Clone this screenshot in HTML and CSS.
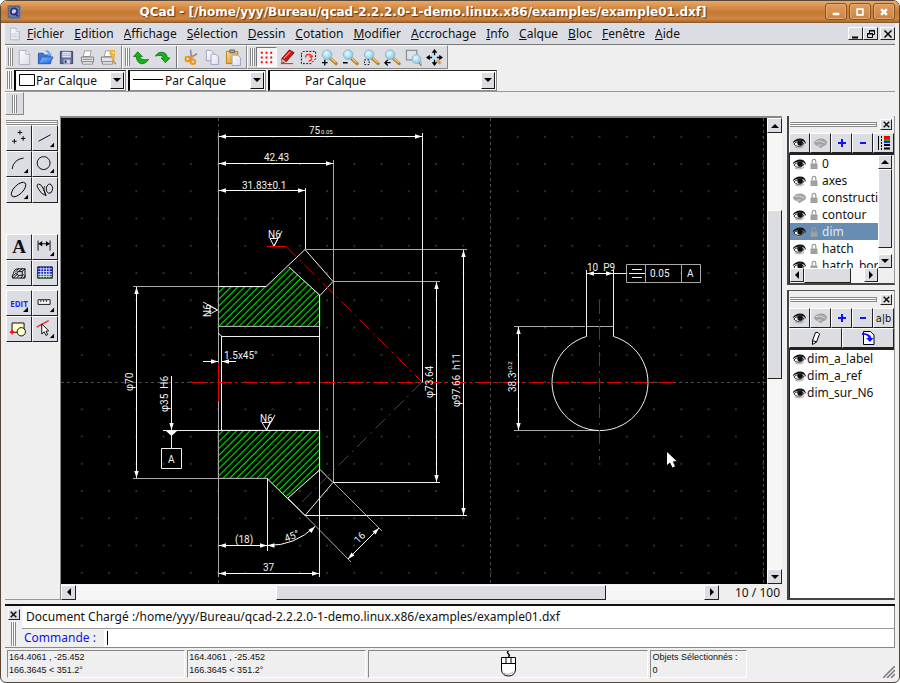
FILE: index.html
```html
<!DOCTYPE html>
<html lang="fr">
<head>
<meta charset="utf-8">
<title>QCad</title>
<link rel="stylesheet" href="styles.css">
</head>
<body>
<svg class="sprite" aria-hidden="true">
  <defs>
    <linearGradient id="gGold" x1="0" y1="0" x2="1" y2="1"><stop offset="0" stop-color="#ffe08a"/><stop offset="1" stop-color="#d08a10"/></linearGradient>
    <linearGradient id="gPaper" x1="0" y1="0" x2="1" y2="1"><stop offset="0" stop-color="#fff"/><stop offset="1" stop-color="#d9dcec"/></linearGradient>
    <radialGradient id="gLens" cx=".4" cy=".35" r=".7"><stop offset="0" stop-color="#eafcff"/><stop offset="1" stop-color="#7cc4e8"/></radialGradient>
    <linearGradient id="gBlue" x1="0" y1="0" x2="1" y2="1"><stop offset="0" stop-color="#8cc4ff"/><stop offset="1" stop-color="#1f5fd8"/></linearGradient>
  </defs>
  <symbol id="page" viewBox="0 0 18 18"><path d="M3.500 1.500h7l4 4v11h-11z" fill="url(#gPaper)" stroke="#a9adc0"/><path d="M10.500 1.500v4h4" fill="#fff" stroke="#a9adc0"/></symbol>
  <symbol id="lens" viewBox="0 0 18 18"><path d="M10 10l6 5.500" stroke="#b9852f" stroke-width="3.400" stroke-linecap="round"/><path d="M10.500 9.800l5 4.600" stroke="#f5cf8c" stroke-width="1.200"/><circle cx="6.500" cy="6" r="5" fill="url(#gLens)" stroke="#8fb4c8"/></symbol>
  <symbol id="eye" viewBox="0 0 16 12"><path d="M1 5Q5 0 11 1.500Q14.500 3 15 7Q13 3.800 9 3.300Q4 3 1 6z" fill="currentColor"/><path d="M2 7Q6 2.500 13 6.500Q10 10.500 6 9.500Q3.500 9 2 7z" fill="#fff" stroke="currentColor" stroke-width=".9"/><circle cx="8.600" cy="6" r="2.900" fill="currentColor"/><path d="M3 10l3 1.300 4-.2 3-2" stroke="#999" fill="none"/></symbol>
  <symbol id="eyeoff" viewBox="0 0 16 12"><path d="M1 5.500Q4 .8 9 1.200Q14 1.500 15 5.500Q14 9 11 9.500L8 11.500 5.500 9.500Q2 9 1 5.500z" fill="#a3a3a3"/><path d="M3 4.500Q7 2.500 13 6M5 8.500l4-.5" stroke="#dcdcdc" fill="none"/></symbol>
  <symbol id="lock" viewBox="0 0 8 12"><path d="M2 6V3.500Q2 1.500 4 1.500T6 3.500V6" fill="none" stroke="#999" stroke-width="1.300"/><path d="M0 6h8v6H0z" fill="#999"/><path d="M0 8.500h8M0 10.500h8" stroke="#b5b5b5" stroke-width=".6"/></symbol>
  <symbol id="up" viewBox="0 0 8 8"><path d="M0 6h8L4 2z"/></symbol>
  <symbol id="down" viewBox="0 0 8 8"><path d="M0 2h8L4 6z"/></symbol>
  <symbol id="left" viewBox="0 0 8 8"><path d="M6 0v8L2 4z"/></symbol>
  <symbol id="right" viewBox="0 0 8 8"><path d="M2 0v8L6 4z"/></symbol>
  <symbol id="x" viewBox="0 0 8 8"><path d="M.8.8l6.400 6.400M7.200.8L.8 7.200" stroke="currentColor" stroke-width="1.700"/></symbol>
  <symbol id="corner" viewBox="0 0 6 6"><path d="M6 0v6H0z"/></symbol>
</svg>

<div class="window">
  <header class="title">
    <svg class="logo" viewBox="0 0 16 16"><rect width="16" height="16" rx="2" fill="#79809c"/><path d="M2 2h12v12H2z" fill="none" stroke="#3c4468" stroke-dasharray="2 1"/><circle cx="8" cy="7.500" r="3.600" fill="#c9cfe8" stroke="#2b2f80" stroke-width="2"/><path d="M9 9l3.500 4" stroke="#2b2f80" stroke-width="2"/></svg>
    <h1>QCad - [/home/yyy/Bureau/qcad-2.2.2.0-1-demo.linux.x86/examples/example01.dxf]</h1>
    <div class="winbtns">
      <button aria-label="Réduire"><svg viewBox="0 0 12 12"><path d="M2 8.500h8" stroke="#fff" stroke-width="3"/></svg></button>
      <button aria-label="Agrandir"><svg viewBox="0 0 12 12"><path d="M2.500 2.500h7v7h-7z" stroke="#fff" stroke-width="2" fill="none"/></svg></button>
      <button aria-label="Fermer"><svg viewBox="0 0 12 12"><path d="M2.500 2.500l7 7M9.500 2.500l-7 7" stroke="#fff" stroke-width="3"/></svg></button>
    </div>
  </header>

  <nav class="menu">
    <svg class="docicon" viewBox="0 0 18 18"><use href="#page"/><path d="M5 9h6M5 12h6" stroke="#b9bdd0"/></svg>
    <button><u>F</u>ichier</button><button><u>E</u>dition</button><button><u>A</u>ffichage</button><button><u>S</u>élection</button><button><u>D</u>essin</button><button><u>C</u>otation</button><button><u>M</u>odifier</button><button><u>A</u>ccrochage</button><button><u>I</u>nfo</button><button><u>C</u>alque</button><button><u>B</u>loc</button><button><u>F</u>enêtre</button><button><u>A</u>ide</button>
    <div class="mdi">
      <button aria-label="Réduire le document"><svg viewBox="0 0 10 10"><path d="M1 8.500h6" stroke="#000" stroke-width="2"/></svg></button>
      <button aria-label="Restaurer le document"><svg viewBox="0 0 10 10"><path d="M3.500 4V1.500h5v4H7M3 2h6M1.500 4.500h5v4h-5zM1 5h6" stroke="#000" fill="none"/></svg></button>
      <button class="apart" aria-label="Fermer le document"><svg viewBox="0 0 10 10"><path d="M1.500 1.500l7 7M8.500 1.500l-7 7" stroke="#000" stroke-width="1.500"/></svg></button>
    </div>
  </nav>

  <div class="tools">
    <div class="bar">
      <i class="grip"></i>
      <button aria-label="Nouveau"><svg viewBox="0 0 18 18"><use href="#page"/></svg></button>
      <button aria-label="Ouvrir"><svg viewBox="0 0 18 18"><path d="M1.500 15.500v-11h5l1 2h7v9z" fill="#3c78dc" stroke="#2454b4"/><path d="M8 2q5-2 6 3l2-1-2.500 4L10 5.500l2 0q-1-3-4-3.500z" fill="#6aa8f4"/><path d="M1.500 15.500l3.500-7h12l-3.500 7z" fill="url(#gBlue)" stroke="#2a62c8"/></svg></button>
      <button aria-label="Enregistrer"><svg viewBox="0 0 18 18"><path d="M2.500 2.500h13v13h-13z" fill="#5f6a98" stroke="#39406a"/><path d="M4.500 3h9v6h-9z" fill="#e4e8f8"/><path d="M5 5h8M5 7h8" stroke="#a9b0d0"/><path d="M6 11h7v4.500H6z" fill="#cdd2e8"/><path d="M7 12h2v3H7z" fill="#39406a"/></svg></button>
      <button aria-label="Imprimer"><svg viewBox="0 0 18 18"><path d="M6 2h7l-1.500 6h-7z" fill="#fff" stroke="#999"/><path d="M2.500 8.500h13v5h-13z" fill="#e3e3e3" stroke="#777"/><path d="M3.500 13.500h11v2.500h-11z" fill="#f8f8f8" stroke="#888"/><path d="M4 11h10" stroke="#888"/></svg></button>
      <button aria-label="Aperçu avant impression"><svg viewBox="0 0 18 18"><path d="M6 2h7l-1.500 6h-7z" fill="#fff" stroke="#999"/><path d="M1.500 8.500h13v5h-13z" fill="#e3e3e3" stroke="#777"/><path d="M2.500 13.500h11v2.500h-11z" fill="#f8f8f8" stroke="#888"/><path d="M10 1h6v6l-2 5-2-2 2-3-4-1z" fill="#f0b030"/><path d="M12 3h3v3" fill="#ffe8a0"/><path d="M13 12l4 4" stroke="#e09820" stroke-width="2"/></svg></button>
    </div>
    <div class="bar">
      <i class="grip"></i>
      <button aria-label="Annuler"><svg viewBox="0 0 18 18"><path d="M5 3l5 5H7q1 4.500 9.500 3Q13 16.500 8 15.500 4 14 3.500 8H.5z" fill="#17b417" stroke="#0a6d0a" stroke-width=".8"/></svg></button>
      <button aria-label="Rétablir"><svg viewBox="0 0 18 18"><path d="M12 14.500l-4.500-5H10.500Q9 5.500 1.500 7.500 4 3 9 3.500q5 1 5 6h3z" fill="#17b417" stroke="#0a6d0a" stroke-width=".8"/></svg></button>
      <i class="sep"></i>
      <button aria-label="Couper"><svg viewBox="0 0 18 18"><path d="M8 1l1 9M15 5L6 10" stroke="#8a8fa0" stroke-width="1.800"/><circle cx="5" cy="10.500" r="2.400" fill="none" stroke="#f0940c" stroke-width="2"/><circle cx="10.500" cy="13.500" r="2.400" fill="none" stroke="#f0940c" stroke-width="2"/><path d="M7 10l4-2" stroke="#f0940c" stroke-width="2"/></svg></button>
      <button aria-label="Copier"><svg viewBox="0 0 18 18"><path d="M2.500 1.500h5l3 3v8h-8z" fill="url(#gPaper)" stroke="#9ca2c4"/><path d="M7.500 5.500h5l3 3v8h-8z" fill="url(#gPaper)" stroke="#9ca2c4"/></svg></button>
      <button aria-label="Coller"><svg viewBox="0 0 18 18"><path d="M1.500 2.500h12v13h-12z" fill="url(#gGold)" stroke="#b87c10"/><path d="M5 1h5v3H5z" fill="#9aa0b0" stroke="#666"/><path d="M7.500 6.500h6l3 3v8h-9z" fill="url(#gPaper)" stroke="#9ca2c4"/></svg></button>
    </div>
    <div class="bar">
      <i class="grip"></i>
      <button class="pressed" aria-label="Grille"><svg viewBox="0 0 18 18"><path d="M3 4h14M3 9h14M3 14h14" stroke="#f00" stroke-width="2" stroke-dasharray="2 3"/></svg></button>
      <button aria-label="Mode brouillon"><svg viewBox="0 0 18 18"><path d="M11 1l5 3-8 9-5-3z" fill="#d01818" stroke="#7a0c0c"/><path d="M12 3l-7 7" stroke="#f88" stroke-width="1.200"/><path d="M3 10l5 3-5 2z" fill="#e8c8a0" stroke="#7a0c0c" stroke-width=".7"/><path d="M2 15.500h13" stroke="#f00"/></svg></button>
      <button aria-label="Redessiner"><svg viewBox="0 0 18 18"><path d="M1.500 6q0-3.500 3.500-3.500h11.500v8l-5 5H1.500z" fill="none" stroke="#000" stroke-dasharray="2 1.500"/><path d="M6 9q0-3.500 3.500-3.200T12 9M12 9l-2-1M12 9l1.500-2M12.500 10q-.5 3-3.500 2.500" fill="none" stroke="#f22" stroke-width="1.400"/></svg></button>
      <button aria-label="Zoom avant"><svg viewBox="0 0 18 18"><use href="#lens"/><path d="M1 14.500h6M4 11.500v6" stroke="#000" stroke-width="1.400"/></svg></button>
      <button aria-label="Zoom arrière"><svg viewBox="0 0 18 18"><use href="#lens"/><path d="M1 14.500h5" stroke="#000" stroke-width="1.600"/></svg></button>
      <button aria-label="Zoom auto"><svg viewBox="0 0 18 18"><use href="#lens"/><path d="M1.500 11.500h5v5h-5z" fill="none" stroke="#000" stroke-dasharray="1.700 1.600"/></svg></button>
      <button aria-label="Vue précédente"><svg viewBox="0 0 18 18"><use href="#lens"/><path d="M1 14.500h6M4 11.500l-3 3 3 3" stroke="#000" stroke-width="1.400" fill="none"/></svg></button>
      <button aria-label="Zoom fenêtre"><svg viewBox="0 0 18 18"><path d="M1.500 1.500h11v10h-11z" fill="#dfe3e8" stroke="#8c9098" stroke-width="1.400"/><svg x="6" y="5" width="11" height="11" viewBox="0 0 18 18"><use href="#lens"/></svg></svg></button>
      <button aria-label="Déplacer la vue"><svg viewBox="0 0 18 18"><path d="M11 11l4.500 4.500" stroke="#d8a050" stroke-width="3"/><circle cx="9" cy="9" r="4" fill="#bfe6f6"/><path d="M9 2v4.500M9 11.500V16M2 9h4.500M11.500 9H16" stroke="#000" stroke-width="1.400"/><path d="M9 0l3 4H6zM9 18l3-4H6zM0 9l4-3v6zM18 9l-4-3v6z"/></svg></button>
    </div>
  </div>

  <div class="combos">
    <i class="grip"></i>
    <label class="combo c1"><svg class="swatch" viewBox="0 0 16 12"><path d="M.5.5h15v11H.5z" fill="#fff" stroke="#000"/></svg><select aria-label="Couleur"><option>Par Calque</option></select><span class="drop"><svg viewBox="0 0 8 8"><use href="#down"/></svg></span></label>
    <label class="combo c2"><svg class="dash" viewBox="0 0 30 2"><path d="M0 .5h30" stroke="#000"/></svg><select aria-label="Épaisseur"><option>Par Calque</option></select><span class="drop"><svg viewBox="0 0 8 8"><use href="#down"/></svg></span></label>
    <label class="combo c3"><select aria-label="Type de ligne"><option>Par Calque</option></select><span class="drop"><svg viewBox="0 0 8 8"><use href="#down"/></svg></span></label>
  </div>

  <div class="options"><div class="optgrip"><i class="grip"></i></div></div>

  <main class="work">
    <aside class="palette">
      <i class="hgrip"></i>
      <div class="grid">
        <button aria-label="Points"><svg viewBox="0 0 26 26"><path d="M14 4.500v5M11.500 7h5M8 14v5M5.500 16.500h5M17.500 11v5M15 13.500h5" stroke="#000"/></svg></button>
        <button aria-label="Lignes"><svg viewBox="0 0 26 26"><path d="M6 16.500l13-7" stroke="#000"/><use href="#corner" x="18" y="18" width="5" height="5"/></svg></button>
        <button aria-label="Arcs"><svg viewBox="0 0 26 26"><path d="M5.500 18.500Q7 8 18 6.500" stroke="#000" fill="none"/><use href="#corner" x="18" y="18" width="5" height="5"/></svg></button>
        <button aria-label="Cercles"><svg viewBox="0 0 26 26"><circle cx="11.500" cy="12" r="7" stroke="#000" fill="none"/><use href="#corner" x="18" y="18" width="5" height="5"/></svg></button>
        <button aria-label="Ellipses"><svg viewBox="0 0 26 26"><ellipse cx="12.500" cy="12.500" rx="10" ry="4.800" transform="rotate(-45 12.500 12.500)" stroke="#000" fill="none"/><use href="#corner" x="18" y="18" width="5" height="5"/></svg></button>
        <button aria-label="Splines"><svg viewBox="0 0 26 26"><path d="M14 19Q9 18 6 12 3 7 6 6.500q3 0 5 5 3 6 3 7.500M14 19Q10 10 13 9M19.500 7q3.500 4 0 9-3 2-5-2-1-5 2-7 2-1 3 0z" stroke="#000" fill="none"/></svg></button>
      </div>
      <div class="grid second">
        <button class="serif">A</button>
        <button aria-label="Cotations"><svg viewBox="0 0 26 26"><path d="M5.500 6v11M18.500 6v11M6 9.500h12" stroke="#000"/><path d="M6 9.500l4-3v6zM18 9.500l-4-3v6z"/><use href="#corner" x="18" y="18" width="5" height="5"/></svg></button>
        <button aria-label="Hachures"><svg viewBox="0 0 26 26"><path d="M6 18.500q-1-3 1-5 1-5 4.500-5h8v10zM10.500 14.500l1-3h5v4h-4zM6 17l4-4M7 18.500l4-4M11 18l2-2.500M15 18.500l3-4M18 18.500l2-3M9 12l4-4M13 11l4-3M16 11.500l4-3" stroke="#000" fill="none"/></svg></button>
        <button aria-label="Image"><svg viewBox="0 0 26 26"><path d="M5 6h16v7H5z" fill="#11c"/><path d="M5 13h16v6H5z" fill="#080"/><path d="M5 8.500h16M5 11.500h16M5 14.500h16M5 17h16M8.500 6v13M11.500 6v13M14.500 6v13M17.500 6v13" stroke="#dfe8ff"/><path d="M5 6.500h16v12H5z" stroke="#223" fill="none"/></svg></button>
      </div>
      <div class="grid third">
        <button class="edit">EDIT<svg class="tri" viewBox="0 0 6 6"><use href="#corner"/></svg></button>
        <button aria-label="Mesures"><svg viewBox="0 0 26 26"><path d="M5.500 9.500h13v5h-13zM8.500 10v2M11.500 10v2M14.500 10v2" stroke="#000" fill="#fff"/><use href="#corner" x="18" y="18" width="5" height="5"/></svg></button>
        <button aria-label="Blocs"><svg viewBox="0 0 26 26"><path d="M5.500 6.500h13v10h-13z" stroke="#000" fill="#ffffcc"/><circle cx="15.500" cy="16" r="4.500" stroke="#000" fill="#ffffcc"/><path d="M5.500 14v5M3 16.500h5" stroke="#f00" stroke-width="1.500"/></svg></button>
        <button aria-label="Sélection"><svg viewBox="0 0 26 26"><path d="M4 11l13-7" stroke="#f22" stroke-width="1.400"/><path d="M9.500 7.500v11l2.500-2.500 2 4 2-1-2-3.500 3-.5z" fill="#fff" stroke="#000"/><use href="#corner" x="18" y="18" width="5" height="5"/></svg></button>
      </div>
    </aside>

    <section class="view">
      <div class="canvas">
        <svg viewBox="61 118 706 480" preserveAspectRatio="xMinYMin slice" role="img" aria-label="Dessin">
          <defs>
            <pattern id="dots" x="204.375" y="368.375" width="27.250" height="27.250" patternUnits="userSpaceOnUse"><rect x="13.100" y="13.100" width="1.200" height="1.200" fill="#777"/></pattern>
            <pattern id="hatch" width="4.800" height="4.800" patternUnits="userSpaceOnUse" patternTransform="rotate(45)"><path d="M1.500 0v5" stroke="#0d0" stroke-width="1.200"/></pattern>
            <marker id="arr" markerUnits="userSpaceOnUse" markerWidth="9" markerHeight="6" refX="8" refY="3" orient="auto-start-reverse"><path d="M1 .8L8 3 1 5.200z" fill="#fff"/></marker>
          </defs>
          <rect x="61" y="118" width="2000" height="2000" fill="url(#dots)"/>
          <path class="meta" d="M218.500 118v1500M490.500 118v1500M763.500 118v1500M61 382.500h2000"/>
          <path fill="url(#hatch)" stroke="#0a0" stroke-width=".6" d="M218 287H267L289 267 320 295V326H218zM218 430H320V470L288 498 267 478H218z"/>
          <g class="grey">
            <path d="M218.500 133V577M133 286.500H218M133 478.500H267M218 326.500H320M305.500 249.500H467M333 281.500H440M514 326.500H585M586 326.500H613M514 430.500H600M333.500 160V482"/>
            <path d="M626.500 264.500h74v18h-74zM645.500 264v18M681.500 264v18"/>
            <path d="M333 482L382 531M288 498L351 562"/>
          </g>
          <g class="line">
            <path d="M422.500 133V382M305.500 188V249M319.500 295V577M221.500 336V430M163 430.500H320M221 336.500H320M218 333L222 336.500M267.500 478V551M333 482.500H440M305 515.500H467M218 286.500H266L305 249.500 333 281.500 320 295.500 289 267M267 478.500L305 515.500 333 482.500 320 469.500 288 498"/>
            <path d="M586.500 270V336.500A48 48 0 1 0 613.500 336.500V270M613 273.500H626M629 273.500H645M632 269.500H642M632 277.500H642"/>
            <path d="M161.500 448.500h20v20h-20zM171.500 431V448M270 238.500H278L274 246zM274 246L282 231M262 422.500H270L266.500 430zM266.500 430L275 415M210 306V314L217.500 310zM217.500 310L203 302"/>
          </g>
          <path d="M166 431h11l-5.500 5z" fill="#fff"/>
          <g class="dim">
            <path d="M219 136.500H422"/><path d="M219 163.500H333"/><path d="M219 190.500H305"/>
            <path d="M219 545.500H267"/><path d="M219 573.500H319"/>
            <path d="M436.500 282V482"/><path d="M463.500 250V515"/><path d="M136.500 287V478"/>
            <path d="M518.500 327V430"/><path d="M587 273.500H613"/><path d="M348 559L379 528"/>
            <path d="M267.500 545.500A68 68 0 0 0 315 526.500"/>
          </g>
          <g class="dimend"><path d="M171.500 376V430"/><path d="M203 361.500H218"/><path d="M236 361.500H222"/></g>
          <g class="axis">
            <path class="solid" d="M218.500 363V401"/>
            <path class="solid" d="M267 246.500H286"/>
            <path d="M191 382.500H675"/>
            <path d="M286 246.500L422 382"/>
            <path d="M422 382L293 511"/>
            <path d="M599.500 300V460"/>
          </g>
          <g class="cad">
            <text x="309" y="134">75</text><text class="tiny" x="321" y="134">0.05</text>
            <text x="264" y="161">42.43</text><text x="242" y="189">31.83±0.1</text>
            <text x="268" y="238">N6</text><text x="260" y="422">N6</text>
            <text x="224" y="359">1.5x45°</text><text x="235" y="543">(18)</text><text x="263" y="571">37</text>
            <text x="168" y="463">A</text><text x="650" y="277">0.05</text><text x="687" y="277">A</text>
            <text x="587" y="271">10&#160; P9</text>
            <text transform="translate(133 391) rotate(-90)">φ70</text>
            <text transform="translate(168 412) rotate(-90)">φ35&#160; H6</text>
            <text transform="translate(211 317) rotate(-90)">N6</text>
            <text transform="translate(433 398) rotate(-90)">φ73.64</text>
            <text transform="translate(460 407) rotate(-90)">φ97.66&#160; h11</text>
            <text transform="translate(516 392) rotate(-90)">38.3</text><text class="tiny" transform="translate(512 373) rotate(-90)">+0.2</text>
            <text transform="translate(286 542) rotate(-22)">45°</text>
            <text transform="translate(358 544) rotate(-45)">16</text>
          </g>
          <path d="M667 452v13l3-2.500 2.500 5 2.500-1.200-2.200-4.800 3.700-.5z" fill="#fff"/>
        </svg>
      </div>
      <div class="scroll v"><button aria-label="Haut"><svg viewBox="0 0 8 8"><use href="#up"/></svg></button><div class="track"><i class="pad"></i><i class="thumb"></i><i class="pad2"></i></div><button aria-label="Bas"><svg viewBox="0 0 8 8"><use href="#down"/></svg></button></div>
      <div class="foot">
        <div class="scroll h"><button aria-label="Gauche"><svg viewBox="0 0 8 8"><use href="#left"/></svg></button><div class="track"><i class="pad"></i><i class="thumb"></i><i class="pad2"></i></div><button aria-label="Droite"><svg viewBox="0 0 8 8"><use href="#right"/></svg></button></div>
        <span class="ratio">10 / 100</span>
      </div>
    </section>

    <aside class="docks">
      <section class="dock">
        <div class="dockhead"><i class="hgrip"></i><button class="close" aria-label="Fermer les calques"><svg viewBox="0 0 8 8"><use href="#x"/></svg></button></div>
        <div class="five">
          <button aria-label="Tout afficher"><svg class="eye" viewBox="0 0 16 12"><use href="#eye"/></svg></button>
          <button aria-label="Tout masquer"><svg class="eye" viewBox="0 0 16 12"><use href="#eyeoff"/></svg></button>
          <button aria-label="Ajouter un calque"><svg viewBox="0 0 10 10"><path d="M5 1v8M1 5h8" stroke="#11f" stroke-width="2"/></svg></button>
          <button aria-label="Supprimer le calque"><svg viewBox="0 0 10 10"><path d="M2 5h6" stroke="#11f" stroke-width="2"/></svg></button>
          <button aria-label="Attributs du calque"><svg class="attr" viewBox="0 0 14 14"><path d="M1.500 0v14" stroke="#000"/><path d="M4.500 0v14" stroke="#000" stroke-dasharray="2 1"/><path d="M7 1.500h6" stroke="#e00" stroke-width="3"/><path d="M7 4h6" stroke="#0a0" stroke-width="2"/><path d="M7 6h6" stroke="#22f" stroke-width="2"/><path d="M7 9h6M7 12.500h6" stroke="#000" stroke-width="2"/></svg></button>
        </div>
        <div class="layers">
          <ul>
            <li><svg class="eye" viewBox="0 0 16 12"><use href="#eye"/></svg><svg class="lock" viewBox="0 0 8 12"><use href="#lock"/></svg>0</li>
            <li><svg class="eye" viewBox="0 0 16 12"><use href="#eye"/></svg><svg class="lock" viewBox="0 0 8 12"><use href="#lock"/></svg>axes</li>
            <li><svg class="eye" viewBox="0 0 16 12"><use href="#eyeoff"/></svg><svg class="lock" viewBox="0 0 8 12"><use href="#lock"/></svg>construction</li>
            <li><svg class="eye" viewBox="0 0 16 12"><use href="#eye"/></svg><svg class="lock" viewBox="0 0 8 12"><use href="#lock"/></svg>contour</li>
            <li class="sel"><svg class="eye" viewBox="0 0 16 12"><use href="#eye"/></svg><svg class="lock" viewBox="0 0 8 12"><use href="#lock"/></svg>dim</li>
            <li><svg class="eye" viewBox="0 0 16 12"><use href="#eye"/></svg><svg class="lock" viewBox="0 0 8 12"><use href="#lock"/></svg>hatch</li>
            <li><svg class="eye" viewBox="0 0 16 12"><use href="#eye"/></svg><svg class="lock" viewBox="0 0 8 12"><use href="#lock"/></svg>hatch_border</li>
          </ul>
          <div class="scroll v"><button aria-label="Haut"><svg viewBox="0 0 8 8"><use href="#up"/></svg></button><div class="track"><i class="thumb"></i><i class="pad2"></i></div><button aria-label="Bas"><svg viewBox="0 0 8 8"><use href="#down"/></svg></button></div>
          <div class="scroll h"><button aria-label="Gauche"><svg viewBox="0 0 8 8"><use href="#left"/></svg></button><div class="track"><i class="thumb"></i><i class="pad2"></i></div><button aria-label="Droite"><svg viewBox="0 0 8 8"><use href="#right"/></svg></button></div>
        </div>
      </section>
      <section class="dock blocks">
        <div class="dockhead"><i class="hgrip"></i><button class="close" aria-label="Fermer les blocs"><svg viewBox="0 0 8 8"><use href="#x"/></svg></button></div>
        <div class="five">
          <button aria-label="Tout afficher"><svg class="eye" viewBox="0 0 16 12"><use href="#eye"/></svg></button>
          <button aria-label="Tout masquer"><svg class="eye" viewBox="0 0 16 12"><use href="#eyeoff"/></svg></button>
          <button aria-label="Ajouter un bloc"><svg viewBox="0 0 10 10"><path d="M5 1v8M1 5h8" stroke="#11f" stroke-width="2"/></svg></button>
          <button aria-label="Supprimer le bloc"><svg viewBox="0 0 10 10"><path d="M2 5h6" stroke="#11f" stroke-width="2"/></svg></button>
          <button class="ab">a|b</button>
        </div>
        <div class="two">
          <button aria-label="Éditer le bloc"><svg viewBox="0 0 14 14"><path d="M4.500 13.500v-4l3-8h2.500l1.500 1.500-3 8zM4.500 9.500l4 1.500" stroke="#000" fill="#fff"/></svg></button>
          <button aria-label="Insérer le bloc"><svg viewBox="0 0 14 14"><path d="M2.500.5h7l3.500 3.500v9.500h-10.500z" stroke="#000" fill="#fff"/><path d="M1 4q5-1 6.500 3H5l4 4 3.500-4h-2Q9 2 1 2z" fill="#11f"/></svg></button>
        </div>
        <ul class="blocklist">
          <li><svg class="eye" viewBox="0 0 16 12"><use href="#eye"/></svg>dim_a_label</li>
          <li><svg class="eye" viewBox="0 0 16 12"><use href="#eye"/></svg>dim_a_ref</li>
          <li><svg class="eye" viewBox="0 0 16 12"><use href="#eye"/></svg>dim_sur_N6</li>
        </ul>
      </section>
    </aside>
  </main>

  <section class="command">
    <div class="cmdside"><button class="close" aria-label="Fermer la console"><svg viewBox="0 0 8 8"><use href="#x"/></svg></button><i class="grip"></i></div>
    <div class="cmdbody">
      <p class="log">Document Chargé :/home/yyy/Bureau/qcad-2.2.2.0-1-demo.linux.x86/examples/example01.dxf</p>
      <div class="prompt"><label for="cmd">Commande :</label><i class="caret"></i><input id="cmd" type="text"></div>
    </div>
  </section>

  <footer class="status">
    <div class="cell a">164.4061 , -25.452<br>166.3645 &lt; 351.2°</div>
    <div class="cell b">164.4061 , -25.452<br>166.3645 &lt; 351.2°</div>
    <div class="cell c"><svg viewBox="0 0 18 26"><path d="M8.500 0q-2 1.500 0 3 1.500 1 0 3" stroke="#000" fill="none" stroke-width="1.500"/><path d="M1.500 6.500h14V19q-1 6-7 6t-7-6z" fill="#fff" stroke="#000"/><path d="M1.500 12.500h14M6 6.500v6M11 6.500v6" stroke="#000"/><path d="M4 22q4 3 9-1" stroke="#aaa" fill="none"/></svg></div>
    <div class="cell d">Objets Sélectionnés :<br>0</div>
    <svg class="size" viewBox="0 0 12 12"><path d="M0 12L12 0M4 12l8-8M8 12l4-4" stroke="#777" stroke-width="1.500"/></svg>
  </footer>
</div>
</body>
</html>
```
FILE: styles.css
```css
* { box-sizing: border-box; }
body { margin: 0; background: #fff; font-family: "Noto Sans", sans-serif; font-size: 12px; color: #111; }
button { font: inherit; color: inherit; margin: 0; padding: 0; background: #dcdde3; border: 1px solid; border-color: #fff #222 #222 #fff; display: flex; align-items: center; justify-content: center; overflow: hidden; }
ul, p, h1 { margin: 0; padding: 0; list-style: none; }
svg { display: block; flex: none; }
.sprite { position: absolute; width: 0; height: 0; }

.window { height: 100vh; display: flex; flex-direction: column; background: #efefef; border: 1px solid #55463a; border-radius: 7px 7px 6px 6px; overflow: hidden; padding-bottom: 3px; }

/* title bar */
.title { flex: none; height: 22px; display: flex; align-items: center; padding: 0 4px 0 6px; background: linear-gradient(#eaa868, #d68d47 30%, #c47a35 55%, #cf8640 85%, #a8672c); border-bottom: 1px solid #8a5a30; }
.logo { width: 14px; height: 14px; }
.title h1 { flex: 1; text-align: center; font: bold 12px/20px "DejaVu Sans", sans-serif; color: #fff; text-shadow: 1px 1px 1px #5a3510; white-space: nowrap; overflow: hidden; }
.winbtns { display: flex; gap: 2px; }
.winbtns button { width: 22px; height: 17px; border: 1px solid #8a5524; border-radius: 3px; background: linear-gradient(#e0a060, #c98340); box-shadow: inset 0 0 0 1px #e0a870; }
.winbtns svg { width: 10px; height: 10px; }

/* menu bar */
.menu { flex: none; height: 22px; display: flex; align-items: center; gap: 10px; margin: 0 4px; padding-left: 3px; background: #dcdde3; border-bottom: 1px solid #777; }
.menu > button { border: 0; background: none; line-height: 18px; }
.docicon { width: 14px; height: 14px; margin-right: -5px; }
.mdi { margin-left: auto; display: flex; }
.mdi button { width: 15px; height: 13px; }
.mdi svg { width: 10px; height: 10px; }
.mdi .apart { margin-left: 2px; }

/* tool bars */
.grip { flex: none; width: 5px; height: 18px; border: 1px solid #888; border-width: 0 1px; background: linear-gradient(90deg, #fff 1px, #888 1px 2px, #fff 2px); }
.hgrip { flex: 1; height: 5px; border: 1px solid #888; border-width: 1px 1px 1px 0; background: linear-gradient(#fff 1px, #888 1px 2px, #fff 2px); }
.tools { flex: none; display: flex; height: 24px; margin: 0 4px; }
.bar { display: flex; align-items: center; background: #dcdde3; border: 1px solid; border-color: #fff #888 #888 #fff; padding: 0 2px; }
.bar button { width: 21px; height: 20px; border: 0; background: none; }
.bar .grip { margin-right: 1px; }
.bar svg { width: 17px; height: 17px; }
.bar button.pressed { background: #f4f4f6; border: 1px solid; border-color: #777 #fff #fff #777; }
.sep { width: 2px; height: 22px; margin: 0 3px; border-left: 1px solid #777; background: #fff; }

.combos { flex: none; display: flex; align-items: center; gap: 2px; height: 22px; margin: 0 4px; padding-left: 2px; }
.combo { display: flex; align-items: center; height: 21px; background: #fff; border: 1px solid; border-color: #222 #888 #888 #000; border-left-width: 2px; padding-left: 3px; }
.combo select { flex: 1; min-width: 0; appearance: none; border: 0; padding: 0; background: none; font: inherit; color: inherit; }
.drop { width: 14px; height: 17px; background: #dcdde3; border: 1px solid; border-color: #fff #111 #111 #fff; display: flex; align-items: center; justify-content: center; margin-right: 1px; }
.drop svg { width: 8px; height: 8px; }
.swatch { width: 16px; height: 12px; margin-right: 1px; }
.dash { width: 30px; height: 2px; margin-right: 2px; }
.c1 { width: 112px; }
.c2 { width: 138px; }
.c3 { width: 229px; padding-left: 35px; }

.options { flex: none; height: 25px; margin: 0 4px; border-top: 1px solid #999; }
.optgrip { width: 19px; height: 23px; display: flex; align-items: center; justify-content: center; background: #dcdde3; border: 1px solid; border-color: #fff #888 #888 #fff; }

/* work area */
.work { flex: 1; min-height: 0; display: flex; margin: 0 4px 4px; }
.palette { flex: none; width: 55px; border-bottom: 1px solid #999; padding: 4px 0 0 1px; display: flex; flex-direction: column; }
.palette .hgrip { flex: none; margin-right: 2px; }
.grid { display: grid; grid-template-columns: 26px 26px; grid-auto-rows: 26px; }
.grid.second { margin-top: 31px; }
.grid.third { margin-top: 4px; }
.grid svg { width: 24px; height: 24px; }
.serif { font: bold 19px "Liberation Serif", serif; }
.edit { position: relative; font: bold 8px "Open Sans", sans-serif; color: #22f; }
.grid .tri { position: absolute; right: 3px; bottom: 3px; width: 5px; height: 5px; }

.view { flex: 1; min-width: 0; display: grid; grid-template-columns: 1fr 15px; grid-template-rows: 1fr 16px; border: 1px solid #888; border-width: 2px 0 0 1px; }
.canvas { background: #000; min-width: 0; min-height: 0; overflow: hidden; }
.canvas svg { width: 100%; height: 100%; }
.foot { grid-column: 1 / 3; display: flex; align-items: center; }
.foot .scroll { flex: 1; }
.ratio { width: 63px; text-align: right; padding-right: 2px; white-space: nowrap; }

.scroll { display: flex; background: #f6f6f6; }
.scroll.v { flex-direction: column; }
.scroll button { flex: none; width: 15px; height: 15px; }
.scroll button svg { width: 8px; height: 8px; }
.track { flex: 1; display: flex; min-height: 0; }
.v .track { flex-direction: column; }
.thumb { background: #dcdde3; border: 1px solid; border-color: #fff #222 #222 #fff; }
.view .v .pad { flex: 78; }
.view .v .thumb { flex: 168; }
.view .v .pad2 { flex: 191; }
.view .h .pad { flex: 201; }
.view .h .thumb { flex: 330; }
.view .h .pad2 { flex: 98; }

.meta { stroke: #4a4a4a; stroke-dasharray: 3 3; fill: none; }
.grey { stroke: #aaa; fill: none; }
.line { stroke: #f0f0f0; fill: none; }
.dim path { stroke: #fff; fill: none; marker-start: url(#arr); marker-end: url(#arr); }
.dimend path { stroke: #fff; fill: none; marker-end: url(#arr); }
.axis { stroke: #e00000; fill: none; stroke-dasharray: 14 5 2 5; }
.axis .solid { stroke-dasharray: none; }
.cad { fill: #f0f0f0; font-family: Roboto, sans-serif; font-size: 10px; }
.cad .tiny { font-size: 6px; }

/* docks */
.docks { flex: none; width: 108px; margin-left: 5px; display: flex; flex-direction: column; gap: 5px; }
.dock { border: 1px solid #444; border-width: 0 1px 2px 2px; border-right-color: #999; padding: 2px 0 0; background: #efefef; }
.dock.blocks { flex: 1; min-height: 0; display: flex; flex-direction: column; border-top: 1px solid #555; }
.dockhead { display: flex; align-items: center; gap: 3px; height: 13px; margin: 0 2px 2px 1px; }
.close { flex: none; width: 12px; height: 11px; }
.close svg { width: 7px; height: 7px; }
.five { display: grid; grid-template-columns: repeat(5, 21px); grid-auto-rows: 20px; }
.two { display: grid; grid-template-columns: 1fr 1fr; grid-auto-rows: 20px; }
.five svg { width: 10px; height: 10px; }
.two svg, .five .attr { width: 14px; height: 14px; }
svg.eye, .five svg.eye { width: 15px; height: 12px; }
.ab { font: 11px "DejaVu Sans Condensed", sans-serif; }
.lock { width: 8px; height: 11px; margin: 0 4px 0 3px; }
.layers { display: grid; grid-template-columns: 1fr 14px; grid-template-rows: 113px 15px; border: 1px solid #222; border-width: 2px 0 0 1px; padding-right: 2px; background: #efefef; }
.layers ul { overflow: hidden; background: #fff; min-width: 0; }
.layers .scroll button { width: 14px; height: 14px; }
.layers .v .thumb { flex: 78; }
.layers .v .pad2 { flex: 6; }
.layers .h .thumb { flex: 47; }
.layers .h .pad2 { flex: 13; }
.dock li { display: flex; align-items: center; height: 17px; padding-left: 2px; white-space: nowrap; }
.dock li.sel { background: #678db2; color: #e4e9f0; }
.dock li.sel svg { color: #111; }
.blocklist { flex: 1; background: #fff; border: 1px solid #222; border-width: 2px 0 0 1px; }

/* command line */
.command { flex: none; height: 44px; display: flex; margin: 0 4px; border-top: 2px solid #111; border-bottom: 1px solid #888; }
.cmdside { width: 17px; padding: 3px 0 1px; display: flex; flex-direction: column; align-items: center; gap: 2px; }
.cmdside .grip { flex: 1; }
.cmdbody { flex: 1; min-width: 0; border-right: 1px solid #888; }
.log { height: 23px; line-height: 22px; padding-left: 4px; background: #fff; border-bottom: 1px solid #999; white-space: nowrap; overflow: hidden; }
.prompt { display: flex; height: 18px; background: #fff; }
.prompt label { width: 82px; padding-left: 2px; line-height: 18px; color: #11e; background: #efefef; }
.caret { width: 1px; height: 14px; margin: 2px 0 0 3px; background: #000; }
.prompt input { flex: 1; min-width: 0; border: 0; padding: 0 2px; background: none; font: inherit; outline: 0; }

/* status bar */
.status { flex: none; height: 31px; display: flex; align-items: stretch; gap: 2px; margin: 0 4px; padding: 2px 0 1px 2px; font: 9px/13px "Liberation Sans", sans-serif; }
.cell { border: 1px solid; border-color: #888 #fff #fff #888; padding-left: 1px; white-space: nowrap; overflow: hidden; }
.a, .b { flex: 178; }
.c { flex: 282; display: flex; align-items: center; justify-content: center; }
.c svg { width: 18px; height: 26px; }
.d { flex: 95; }
.size { flex: none; width: 12px; height: 12px; margin: auto 0 0 134px; }
```
